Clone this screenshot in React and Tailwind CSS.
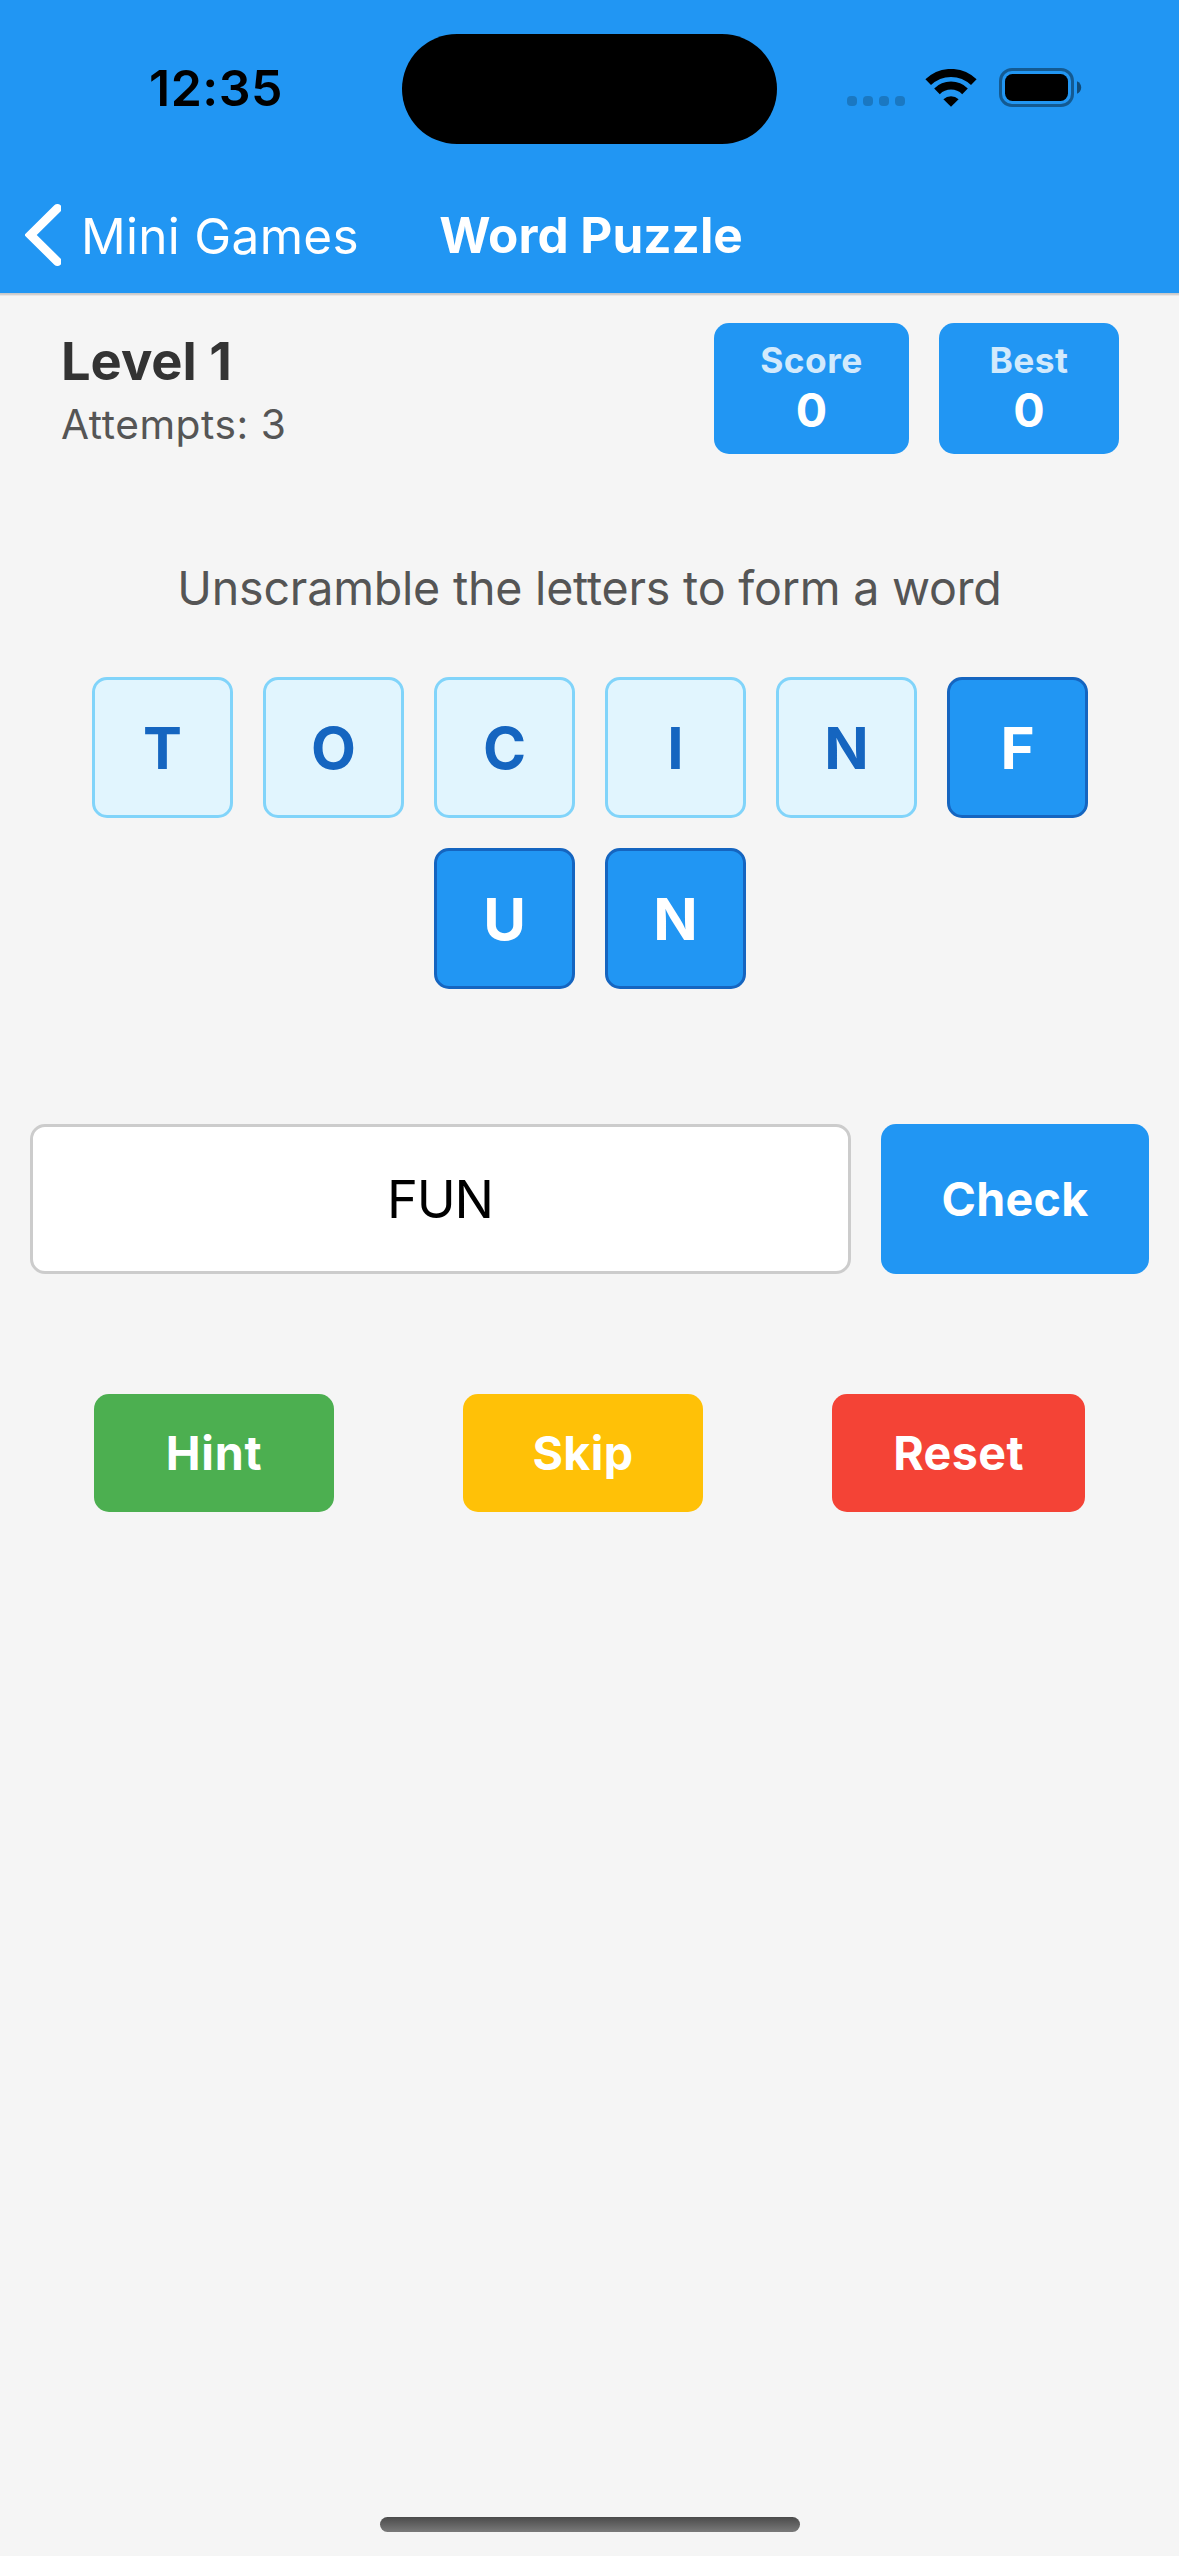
import React from "react";

const TILES = [
  { letter: "T", used: false },
  { letter: "O", used: false },
  { letter: "C", used: false },
  { letter: "I", used: false },
  { letter: "N", used: false },
  { letter: "F", used: true },
  { letter: "U", used: true },
  { letter: "N", used: true },
];

function WifiIcon() {
  return (
    <svg className="h-[38px] w-[52px]" viewBox="0 0 52 38" fill="none">
      <g stroke="#000" strokeWidth="8">
        <path d="M3.2 13.2 A32.6 32.6 0 0 1 48.8 13.2" />
        <path d="M12 22.3 A20 20 0 0 1 40 22.3" />
      </g>
      <path d="M26 37.8 L18.4 30.2 A11.4 11.4 0 0 1 33.6 30.2 Z" fill="#000" />
    </svg>
  );
}

function BatteryIcon() {
  return (
    <svg className="h-[39px] w-[83px]" viewBox="0 0 83 39" fill="none">
      <rect x="1.5" y="1.5" width="72" height="36" rx="11.5" stroke="#000" strokeOpacity="0.4" strokeWidth="3" />
      <rect x="6" y="6" width="63" height="27" rx="7.5" fill="#000" />
      <path d="M78 13.2 C80.6 14.4 82.2 16.8 82.2 19.5 C82.2 22.2 80.6 24.6 78 25.8 Z" fill="#000" fillOpacity="0.5" />
    </svg>
  );
}

function StatusBar() {
  return (
    <div className="relative flex h-[177px] items-center justify-between pr-[97px] pb-[2px] pl-[149px] text-black">
      <span className="text-[50px] leading-[60px] font-semibold tracking-[0.5px]">12:35</span>
      <div className="absolute top-[34px] left-[402px] h-[110px] w-[375px] rounded-full bg-black" />
      <div className="flex items-center">
        <div className="mt-[27px] mr-[20px] flex gap-[6px]">
          {[0, 1, 2, 3].map((n) => (
            <span key={n} className="size-[10px] rounded-[4px] bg-black/20" />
          ))}
        </div>
        <WifiIcon />
        <div className="ml-[22px]">
          <BatteryIcon />
        </div>
      </div>
    </div>
  );
}

function NavBar() {
  return (
    <div className="grid h-[116px] grid-cols-[1fr_auto_1fr] items-center px-[25px] text-white">
      <button className="flex items-center gap-[20px]">
        <svg className="h-[62px] w-[36px]" viewBox="0 0 36 62" fill="none">
          <path d="M32.4 4.4 L5.6 31 L32.4 57.6" stroke="#fff" strokeWidth="8.8" strokeLinecap="round" strokeLinejoin="miter" />
        </svg>
        <span className="pt-[2px] text-[49.5px] leading-[60px] tracking-[0.3px] whitespace-nowrap">Mini Games</span>
      </button>
      <h1 className="pl-[3px] text-[49.5px] leading-[60px] font-bold whitespace-nowrap">Word Puzzle</h1>
      <span />
    </div>
  );
}

function StatBox({ label, value, width }) {
  return (
    <div className={`flex h-[131px] flex-col items-center rounded-[15px] bg-[#2196f3] pt-[16px] text-white ${width}`}>
      <span className="text-[35.3px] leading-[44px] font-bold tracking-[0.5px] opacity-80">{label}</span>
      <span className="text-[46.6px] leading-[55px] font-bold">{value}</span>
    </div>
  );
}

function Tile({ letter, used }) {
  return (
    <button
      className={`flex size-[141px] items-center justify-center rounded-[15px] border-[3px] pt-[2px] pl-[1px] text-[58.3px] leading-none font-bold ${
        used ? "border-[#1565c0] bg-[#2196f3] text-white" : "border-[#81d4fa] bg-[#e1f5fe] text-[#1565c0]"
      }`}
    >
      {letter}
    </button>
  );
}

function ActionButton({ label, style }) {
  return (
    <button className={`h-[118px] rounded-[15px] text-[46.6px] leading-none font-bold text-white ${style}`}>{label}</button>
  );
}

export default function App() {
  return (
    <div className="flex h-[2556px] w-[1179px] flex-col bg-[#f5f5f5] font-['Inter',sans-serif]">
      <header className="h-[293px] shrink-0 bg-[#2196f3] shadow-[0_1px_0_#c9c9c9,0_2px_0_#d2d0d0,0_3px_0_#e8e6e6]">
        <StatusBar />
        <NavBar />
      </header>

      <section className="mt-[30px] flex justify-between pr-[60px] pl-[61px]">
        <div className="pt-[6px]">
          <h2 className="text-[52.4px] leading-[64px] font-bold text-[#333]">Level 1</h2>
          <p className="mt-[7px] text-[40.7px] leading-[50px] tracking-[0.55px] text-[#555]">Attempts: 3</p>
        </div>
        <div className="flex gap-[30px]">
          <StatBox label="Score" value="0" width="w-[195px]" />
          <StatBox label="Best" value="0" width="w-[180px]" />
        </div>
      </section>

      <p className="mt-[105px] text-center text-[46.6px] leading-[58px] tracking-[-0.22px] text-[#555]">
        Unscramble the letters to form a word
      </p>

      <section className="mt-[60px] flex flex-wrap justify-center gap-[30px] px-[60px]">
        {TILES.map((t, i) => (
          <Tile key={i} letter={t.letter} used={t.used} />
        ))}
      </section>

      <section className="mt-[135px] flex h-[150px] gap-[30px] px-[30px]">
        <div className="flex flex-1 items-center justify-center rounded-[15px] border-[3px] border-[#ccc] bg-white pr-[1px] text-[52.4px] leading-none tracking-[-1.2px] text-black">
          FUN
        </div>
        <button className="w-[268px] rounded-[15px] bg-[#2196f3] text-[46.6px] leading-none font-bold tracking-[0.3px] text-white">
          Check
        </button>
      </section>

      <section className="mt-[120px] flex justify-between px-[94px]">
        <ActionButton label="Hint" style="w-[240px] bg-[#4caf50] tracking-[0.8px]" />
        <ActionButton label="Skip" style="w-[240px] bg-[#ffc107] tracking-[0.4px]" />
        <ActionButton label="Reset" style="w-[253px] bg-[#f44336] tracking-[0.4px]" />
      </section>

      <div className="mt-auto mb-[24px] h-[15px] w-[420px] self-center rounded-full bg-linear-to-b from-[#4b4b4b] to-[#7a7a7a]" />
    </div>
  );
}
